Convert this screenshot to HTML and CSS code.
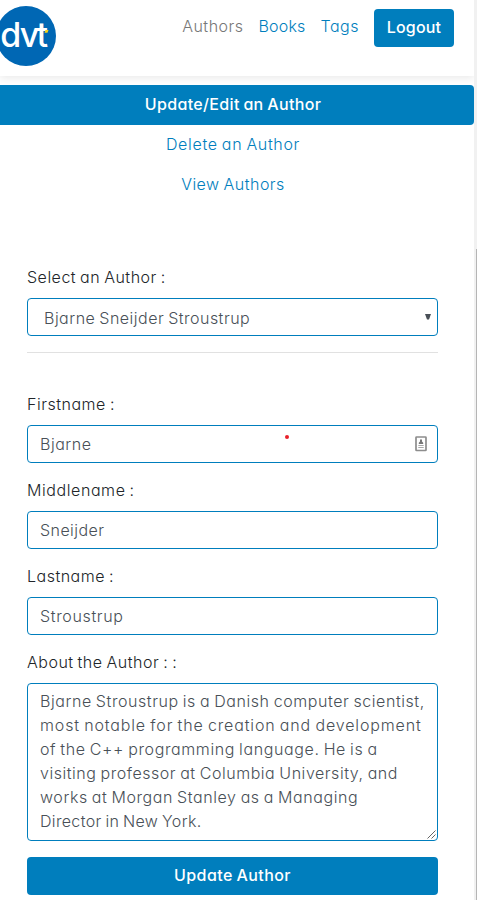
FILE: index.html
```html
<!DOCTYPE html>
<html lang="en">
<head>
<meta charset="utf-8">
<title>Update Author</title>
<link rel="stylesheet" href="styles.css">
</head>
<body>
<div class="page">
  <header class="topbar">
    <svg class="logo" width="56" height="60" viewBox="0 0 56 60" role="img" aria-label="dvt">
      <circle cx="26" cy="30" r="30" fill="#0067b4"/>
      <text class="logo-text" x="0.2 19.7 36.5" y="40.7">dvt</text>
      <path d="M45.500 24h3l-1 2.700h-3z" fill="#f7d117"/>
    </svg>
    <nav class="links">
      <a class="link muted"><span class="t-authors">Authors</span></a>
      <a class="link"><span class="t-books">Books</span></a>
      <a class="link"><span class="t-tags">Tags</span></a>
      <a class="btn logout"><span class="t-logout">Logout</span></a>
    </nav>
  </header>
  <nav class="pills">
    <a class="pill active"><span class="t-update">Update/Edit an Author</span></a>
    <a class="pill"><span class="t-delete">Delete an Author</span></a>
    <a class="pill"><span class="t-view">View Authors</span></a>
  </nav>
  <main class="form">
    <div class="label"><span class="t-select">Select an Author :</span></div>
    <div class="control select"><span class="t-full">Bjarne Sneijder Stroustrup</span>
      <svg class="arrow" width="6" height="6" viewBox="0 0 6 6"><path d="M0 0h6L4 5.500H2z" fill="#495057"/></svg>
    </div>
    <hr class="rule">
    <div class="label"><span class="t-first">Firstname :</span></div>
    <div class="control first"><span class="t-bjarne">Bjarne</span>
      <i class="dot"></i>
      <svg width="12" height="16" viewBox="0 0 12 16"><rect x="1" y="1" width="10" height="13.500" rx=".6" fill="#fff" stroke="#8d8d8d" stroke-width="1.700"/><path d="M6 3l1 1v1.500l1.200 1.200V8H3.800V6.700L5 5.500V4z" fill="#777"/><path d="M3.300 9h5.400v1H3.300zM3.300 11h5.400v1H3.300z" fill="#aaa"/></svg>
    </div>
    <div class="label"><span class="t-middle">Middlename :</span></div>
    <div class="control"><span class="t-sneijder">Sneijder</span></div>
    <div class="label"><span class="t-last">Lastname :</span></div>
    <div class="control"><span class="t-stroustrup">Stroustrup</span></div>
    <div class="label"><span class="t-about">About the Author : :</span></div>
    <div class="control area">
      <span class="t-l1">Bjarne Stroustrup is a Danish computer scientist,</span><br>
      <span class="t-l2">most notable for the creation and development</span><br>
      <span class="t-l3">of the C++ programming language. He is a</span><br>
      <span class="t-l4">visiting professor at Columbia University, and</span><br>
      <span class="t-l5">works at Morgan Stanley as a Managing</span><br>
      <span class="t-l6">Director in New York.</span>
      <svg class="grip" width="9" height="9" viewBox="0 0 9 9"><path d="M.5 8.500l8-8M4.500 8.500l4-4" stroke="#555" stroke-width=".9"/></svg>
    </div>
    <a class="btn submit"><span class="t-submit">Update Author</span></a>
  </main>
</div>
<div class="scrollbar"><div class="thumb"></div></div>
</body>
</html>
```

FILE: styles.css
```css
* { box-sizing: border-box; }
body {
  margin: 0;
  width: 477px;
  height: 900px;
  overflow: hidden;
  display: flex;
  background: #fff;
  color: #212529;
  font: 300 16px/24px Inter, "Open Sans", sans-serif;
  font-feature-settings: "cv11";
  word-spacing: -1px;
}
.page { width: 474px; }
.topbar {
  height: 76px;
  display: flex;
  justify-content: space-between;
  align-items: flex-start;
  padding: 6px 20px 0 0;
  box-shadow: 0 2px 8px rgba(0, 0, 0, .09);
}
.logo { display: block; }
.logo-text { font: 450 34px Inter, sans-serif; fill: #fff; }
.links { display: flex; align-items: center; gap: 15px; padding-top: 3px; }
.link, .pill { color: #007ebd; }
.link { margin-top: -4px; }
.link.muted { color: #777; }
.btn {
  display: flex;
  align-items: center;
  justify-content: center;
  height: 38px;
  padding-bottom: 2px;
  border-radius: 4px;
  background: #007ebd;
  color: #fff;
  font-weight: 500;
}
.logout { width: 80px; }
.pills { margin-top: 9px; }
.pill { display: flex; justify-content: center; padding: 7px 16px 9px 8px; height: 40px; }
.pill.active { background: #007ebd; color: #fff; border-radius: 0 4px 4px 0; font-weight: 500; }
.form { width: 411px; margin: 60px 0 0 27px; }
.label { height: 24px; margin: -1px 0 9px; white-space: nowrap; }
.form > .label:first-child { margin-top: 0; }
.control {
  position: relative;
  display: flex;
  align-items: center;
  justify-content: space-between;
  height: 38px;
  margin-bottom: 16px;
  padding: 0 12px;
  border: 1px solid #007ebd;
  border-radius: 4px;
  color: #495057;
  white-space: nowrap;
}
.select { padding: 1px 6px 0 16px; }
.arrow { margin-top: -1px; }
.first { padding-right: 10px; }
.dot { position: absolute; left: 257px; top: 9px; width: 4px; height: 4px; border-radius: 50%; background: #e8202a; }
.rule { height: 1px; margin: 0 0 40px; border: 0; background: #e1e1e1; }
.area { display: block; height: 158px; padding: 5px 12px; }
.grip { position: absolute; right: 1px; bottom: 1px; }
.scrollbar { width: 3px; height: 900px; padding: 249px 0 0 2px; background: #f1f1f1; }
.thumb { height: 651px; background: #b5b5b5; }

/* Tracking per text */
.t-authors { letter-spacing: .48px; }
.t-books { letter-spacing: .2px; }
.t-tags { letter-spacing: .5px; }
.t-logout { letter-spacing: .18px; }
.t-update { letter-spacing: .35px; }
.t-delete { letter-spacing: .67px; }
.t-view { letter-spacing: .48px; }
.t-select { letter-spacing: .5px; }
.t-full { letter-spacing: .49px; }
.t-first { letter-spacing: .52px; }
.t-bjarne { letter-spacing: .52px; }
.t-middle { letter-spacing: .58px; }
.t-sneijder { letter-spacing: .44px; }
.t-last { letter-spacing: .5px; }
.t-stroustrup { letter-spacing: .65px; }
.t-about { letter-spacing: .5px; }
.t-l1 { letter-spacing: .57px; }
.t-l2 { letter-spacing: .85px; }
.t-l3 { letter-spacing: .61px; }
.t-l4 { letter-spacing: .54px; }
.t-l5 { letter-spacing: .58px; }
.t-l6 { letter-spacing: .34px; }
.t-submit { letter-spacing: .43px; }
```
